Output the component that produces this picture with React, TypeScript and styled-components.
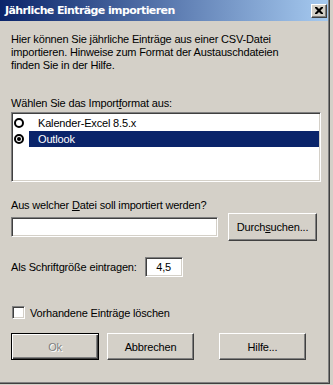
import styled, { createGlobalStyle, css } from 'styled-components';

const GlobalStyle = createGlobalStyle`
    html, body {
        margin: 0;
        padding: 0;
        background: #d4d0c8;
    }
    body {
        font-family: "Liberation Sans", Arial, sans-serif;
        font-size: 11px;
        letter-spacing: -0.17px;
        color: #000;
    }
`;

const raised = css`
    border: 1px solid;
    border-color: #fff #404040 #404040 #fff;
    box-shadow: inset -1px -1px 0 #808080, inset 1px 1px 0 #d4d0c8;
`;

const sunken = css`
    border: 1px solid;
    border-color: #808080 #fff #fff #808080;
    box-shadow: inset 1px 1px 0 #404040, inset -1px -1px 0 #d4d0c8;
`;

const Window = styled.div`
    width: 330px;
    height: 384px;
    box-sizing: border-box;
    background: #d4d0c8;
    border-right: 1px solid #404040;
    border-bottom: 1px solid #404040;
    box-shadow: inset -1px -1px 0 #808080;
    display: flex;
    flex-direction: column;
`;

const TitleBar = styled.div`
    height: 21px;
    background: linear-gradient(to right, #0a246a, #a6caf0);
    display: flex;
    align-items: center;
    justify-content: space-between;
    padding: 0 1px 0 5px;
    margin-right: 1px;
`;

const Title = styled.span`
    color: #fff;
    font-weight: bold;
    font-size: 11px;
    font-family: "DejaVu Sans", Verdana, sans-serif;
    letter-spacing: -0.6px;
`;

const CloseButton = styled.div`
    ${raised};
    width: 14px;
    height: 12px;
    background: #d4d0c8;
    display: flex;
    align-items: center;
    justify-content: center;
`;

const Body = styled.div`
    padding: 12px 0 0 11px;
    display: flex;
    flex-direction: column;
`;

const Text = styled.p`
    margin: 0;
    line-height: 13px;
`;

const Label = styled.div<{ $top?: number }>`
    line-height: 13px;
    margin-top: ${p => p.$top ?? 0}px;
`;

const ListBox = styled.div`
    ${sunken};
    margin-top: 2px;
    width: 310px;
    height: 70px;
    box-sizing: border-box;
    background: #fff;
    padding: 2px 1px 2px 2px;
`;

const ListItem = styled.div`
    height: 16px;
    display: flex;
    align-items: center;
`;

const RadioCell = styled.div`
    width: 15px;
    display: flex;
    align-items: center;
`;

const Radio = styled.div<{ $checked?: boolean }>`
    width: 10px;
    height: 10px;
    border: 2px solid #000;
    border-radius: 50%;
    box-sizing: border-box;
    display: flex;
    align-items: center;
    justify-content: center;
    &::after {
        content: '';
        width: 4px;
        height: 4px;
        border-radius: 50%;
        background: ${p => (p.$checked ? '#000' : 'transparent')};
    }
`;

const ItemText = styled.div<{ $selected?: boolean }>`
    flex: 1;
    height: 100%;
    display: flex;
    align-items: center;
    padding-left: 9px;
    background: ${p => (p.$selected ? '#0a246a' : 'transparent')};
    color: ${p => (p.$selected ? '#fff' : '#000')};
`;

const Row = styled.div<{ $top: number }>`
    display: flex;
    align-items: center;
    margin-top: ${p => p.$top}px;
`;

const TextInput = styled.div<{ $width: number; $left?: number }>`
    ${sunken};
    width: ${p => p.$width}px;
    height: 20px;
    margin-left: ${p => p.$left ?? 0}px;
    box-sizing: border-box;
    background: #fff;
    display: flex;
    align-items: center;
    justify-content: center;
`;

const Button = styled.div<{ $width: number; $height?: number; $left?: number; $default?: boolean; $disabled?: boolean }>`
    ${raised};
    width: ${p => p.$width}px;
    height: ${p => p.$height ?? 27}px;
    margin-left: ${p => p.$left ?? 0}px;
    box-sizing: border-box;
    display: flex;
    align-items: center;
    justify-content: center;
    background: #d4d0c8;
    color: ${p => (p.$disabled ? '#808080' : '#000')};
    text-shadow: ${p => (p.$disabled ? '1px 1px 0 #fff' : 'none')};
    ${p =>
        p.$default &&
        css`
            border: 1px solid #000;
            box-shadow: inset 1px 1px 0 #fff, inset -1px -1px 0 #404040, inset -2px -2px 0 #808080;
        `}
`;

const CheckBox = styled.div`
    ${sunken};
    width: 13px;
    height: 13px;
    box-sizing: border-box;
    background: #fff;
    margin-left: 1px;
    margin-right: 5px;
`;

function App() {
    return (
        <>
            <GlobalStyle />
            <Window>
                <TitleBar>
                    <Title>Jährliche Einträge importieren</Title>
                    <CloseButton>
                        <svg width="8" height="7" viewBox="0 0 8 7">
                            <path d="M0 0h2l2 2 2-2h2v1l-2.5 2.5L8 6v1H6L4 5 2 7H0V6l2.5-2.5L0 1z" fill="#000" />
                        </svg>
                    </CloseButton>
                </TitleBar>
                <Body>
                    <Text>
                        Hier können Sie jährliche Einträge aus einer CSV-Datei<br />
                        importieren. Hinweise zum Format der Austauschdateien<br />
                        finden Sie in der Hilfe.
                    </Text>
                    <Label $top={25}>Wählen Sie das Import<u>f</u>ormat aus:</Label>
                    <ListBox>
                        <ListItem>
                            <RadioCell><Radio /></RadioCell>
                            <ItemText>Kalender-Excel 8.5.x</ItemText>
                        </ListItem>
                        <ListItem>
                            <RadioCell><Radio $checked /></RadioCell>
                            <ItemText $selected>Outlook</ItemText>
                        </ListItem>
                    </ListBox>
                    <Label $top={17}>Aus welcher <u>D</u>atei soll importiert werden?</Label>
                    <Row $top={1}>
                        <TextInput $width={207} />
                        <Button $width={89} $height={28} $left={10}>
                            Durch<u>s</u>uchen...
                        </Button>
                    </Row>
                    <Row $top={16}>
                        <span>Als Schrift<u>g</u>röße eintragen:</span>
                        <TextInput $width={38} $left={8}>4,5</TextInput>
                    </Row>
                    <Row $top={29}>
                        <CheckBox />
                        <span>Vorhandene Einträge löschen</span>
                    </Row>
                    <Row $top={14}>
                        <Button $width={88} $default $disabled>Ok</Button>
                        <Button $width={87} $left={8}>Abbrechen</Button>
                        <Button $width={87} $left={25}>Hilfe...</Button>
                    </Row>
                </Body>
            </Window>
        </>
    );
}

export default App;
